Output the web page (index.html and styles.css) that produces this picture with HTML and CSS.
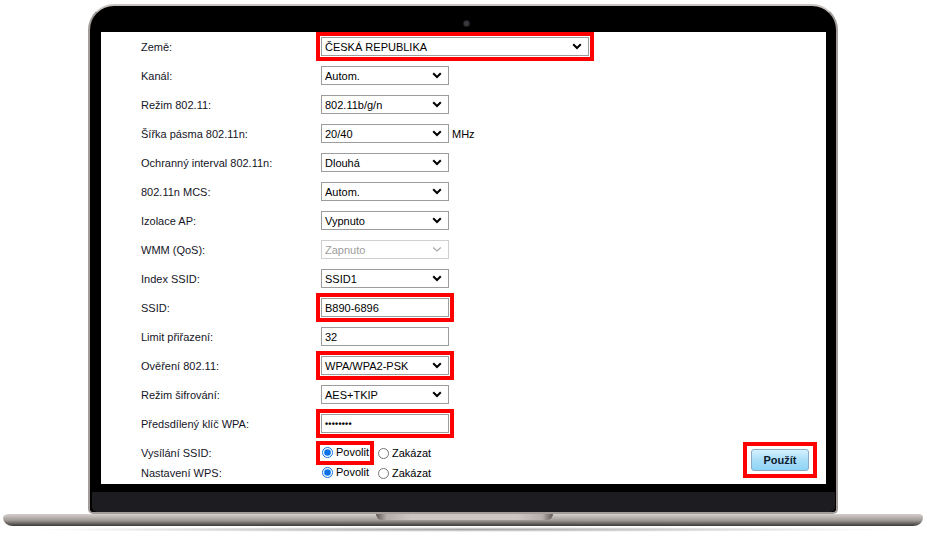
FILE: index.html
```html
<!DOCTYPE html>
<html lang="cs">
<head>
<meta charset="utf-8">
<title>Nastavení WLAN</title>
<link rel="stylesheet" href="styles.css">
</head>
<body>
<div class="page">
  <div class="lid">
    <div class="camera"></div>
    <div class="screen">
      <div class="form">
        <div class="row"><div class="label">Země:</div>
          <div class="hl"><div class="sel wide"><span>ČESKÁ REPUBLIKA</span><svg class="chev" width="10" height="7" viewBox="0 0 10 7"><path d="M1.2 1.3 L5 5 L8.8 1.3" fill="none" stroke="#000" stroke-width="2"/></svg></div></div></div>
        <div class="row"><div class="label">Kanál:</div>
          <div class="sel"><span>Autom.</span><svg class="chev" width="10" height="7" viewBox="0 0 10 7"><path d="M1.2 1.3 L5 5 L8.8 1.3" fill="none" stroke="#000" stroke-width="2"/></svg></div></div>
        <div class="row"><div class="label">Režim 802.11:</div>
          <div class="sel"><span>802.11b/g/n</span><svg class="chev" width="10" height="7" viewBox="0 0 10 7"><path d="M1.2 1.3 L5 5 L8.8 1.3" fill="none" stroke="#000" stroke-width="2"/></svg></div></div>
        <div class="row"><div class="label">Šířka pásma 802.11n:</div>
          <div class="sel"><span>20/40</span><svg class="chev" width="10" height="7" viewBox="0 0 10 7"><path d="M1.2 1.3 L5 5 L8.8 1.3" fill="none" stroke="#000" stroke-width="2"/></svg></div><span class="unit">MHz</span></div>
        <div class="row"><div class="label">Ochranný interval 802.11n:</div>
          <div class="sel"><span>Dlouhá</span><svg class="chev" width="10" height="7" viewBox="0 0 10 7"><path d="M1.2 1.3 L5 5 L8.8 1.3" fill="none" stroke="#000" stroke-width="2"/></svg></div></div>
        <div class="row"><div class="label">802.11n MCS:</div>
          <div class="sel"><span>Autom.</span><svg class="chev" width="10" height="7" viewBox="0 0 10 7"><path d="M1.2 1.3 L5 5 L8.8 1.3" fill="none" stroke="#000" stroke-width="2"/></svg></div></div>
        <div class="row"><div class="label">Izolace AP:</div>
          <div class="sel"><span>Vypnuto</span><svg class="chev" width="10" height="7" viewBox="0 0 10 7"><path d="M1.2 1.3 L5 5 L8.8 1.3" fill="none" stroke="#000" stroke-width="2"/></svg></div></div>
        <div class="row"><div class="label">WMM (QoS):</div>
          <div class="sel disabled"><span>Zapnuto</span><svg class="chev" width="10" height="7" viewBox="0 0 10 7"><path d="M1.2 1.5 L5 5 L8.8 1.5" fill="none" stroke="#a8a8a8" stroke-width="1.2"/></svg></div></div>
        <div class="row"><div class="label">Index SSID:</div>
          <div class="sel"><span>SSID1</span><svg class="chev" width="10" height="7" viewBox="0 0 10 7"><path d="M1.2 1.3 L5 5 L8.8 1.3" fill="none" stroke="#000" stroke-width="2"/></svg></div></div>
        <div class="row"><div class="label">SSID:</div>
          <div class="hl"><input class="txt" type="text" value="B890-6896"></div></div>
        <div class="row"><div class="label">Limit přiřazení:</div>
          <input class="txt" type="text" value="32"></div>
        <div class="row"><div class="label">Ověření 802.11:</div>
          <div class="hl"><div class="sel"><span>WPA/WPA2-PSK</span><svg class="chev" width="10" height="7" viewBox="0 0 10 7"><path d="M1.2 1.3 L5 5 L8.8 1.3" fill="none" stroke="#000" stroke-width="2"/></svg></div></div></div>
        <div class="row"><div class="label">Režim šifrování:</div>
          <div class="sel"><span>AES+TKIP</span><svg class="chev" width="10" height="7" viewBox="0 0 10 7"><path d="M1.2 1.3 L5 5 L8.8 1.3" fill="none" stroke="#000" stroke-width="2"/></svg></div></div>
        <div class="row"><div class="label">Předsdílený klíč WPA:</div>
          <div class="hl"><div class="txt pwd">••••••••</div></div></div>
        <div class="row radio-row first"><div class="label">Vysílání SSID:</div>
          <div class="hl tight"><label class="opt"><input type="radio" name="bc" checked>Povolit</label></div>
          <label class="opt"><input type="radio" name="bc">Zakázat</label></div>
        <div class="row radio-row"><div class="label">Nastavení WPS:</div>
          <div class="plain"><label class="opt"><input type="radio" name="wps" checked>Povolit</label></div>
          <label class="opt"><input type="radio" name="wps">Zakázat</label></div>
      </div>
      <div class="actions">
        <div class="hl btn-hl"><button class="apply" type="button">Použít</button></div>
      </div>
    </div>
    <div class="chin"></div>
  </div>
  <div class="base"><div class="notch"></div></div>
  <div class="shadow"></div>
</div>
</body>
</html>
```

FILE: styles.css
```css
* { box-sizing: border-box; }
html, body { margin: 0; padding: 0; background: #fff; }
body { font-family: "Liberation Sans", Arial, sans-serif; font-size: 11px; color: #15151f; }
.page { width: 927px; height: 537px; overflow: hidden; display: flex; flex-direction: column; }

.lid {
  margin: 4px 0 0 88px;
  width: 750px;
  height: 510px;
  background: #000;
  border: 2px solid #a29d9a;
  border-top-color: #c8c3c0;
  border-radius: 26px 26px 5px 5px;
  padding: 0 10px 0 11px;
  display: flex;
  flex-direction: column;
  align-items: flex-start;
}
.camera {
  width: 5px; height: 5px; border-radius: 50%;
  background: #3a3a3e; box-shadow: 0 0 0 1px #1e1e20;
  margin: 15px 0 6px 363px;
}
.screen {
  width: 725px;
  height: 452px;
  background: #fff;
  display: flex;
  overflow: hidden;
}
.chin {
  margin: 8px -9px 0 -9px;
  width: calc(100% + 18px);
  flex: 1;
  background: #1d1c20;
  border-radius: 0 0 5px 5px;
}

.form { padding-left: 40px; display: flex; flex-direction: column; }
.row { height: 29px; display: flex; align-items: center; }
.radio-row { height: 20px; }
.radio-row.first { margin-top: 5px; }
.label { width: 180px; flex: none; }

.sel {
  width: 128px; height: 19px;
  border: 1px solid #9c9c9c;
  background: #fff;
  display: flex; align-items: center; justify-content: space-between;
  padding: 0 6px 0 3px;
  color: #000;
}
.sel.wide { width: 268px; }
.sel.disabled { color: #9d9d9d; border-color: #cfcfcf; }
.chev { display: block; }
.unit { margin-left: 3px; color: #000; }

.txt {
  width: 128px; height: 19px;
  border: 1px solid #9c9c9c;
  padding: 0 3px;
  font: 11px "Liberation Sans", Arial, sans-serif;
  color: #000;
  background: #fff;
  outline: none;
  display: flex; align-items: center;
  margin: 0;
}
.pwd { font-size: 9px; letter-spacing: 0.2px; font-weight: bold; }

.hl {
  border: 4px solid #ff0000;
  padding: 1px;
  margin: -5px;
  background: #fff;
}
.hl.tight { padding: 1px; margin-right: 4px; }
.plain { padding: 0 9px 0 0; }
.opt { display: inline-flex; align-items: center; color: #000; font-size: 11px; }
.opt input { margin: 0 3px 0 0; width: 11px; height: 11px; accent-color: #0a72e8; }
.hl.tight .opt input, .plain .opt input { margin-left: 1px; }

.actions { align-self: flex-end; margin: 0 9px 6px auto; }
.btn-hl { margin: 0; padding: 3px 4px; }
.apply {
  width: 58px; height: 22px;
  border: 1px solid #88aac6;
  border-radius: 3px;
  background: linear-gradient(#d6f1fd, #a9def8 50%, #8fd4f6);
  font: bold 11px "Liberation Sans", Arial, sans-serif;
  color: #0c1a2c;
  padding: 0;
}

.base {
  margin-left: 3px;
  width: 920px; height: 12px;
  background: linear-gradient(#d5d0cd 0, #bdb7b4 25%, #9d9794 55%, #5c5855 85%, #3a3735 100%);
  border-radius: 6px 4px 10px 10px / 4px 4px 8px 8px;
  display: flex; justify-content: center;
}
.notch {
  margin-left: 3px;
  width: 177px; height: 6px;
  background: linear-gradient(90deg, #5d5856 0, #b6aeab 6%, #cdc5c1 20%, #cdc5c1 80%, #b6aeab 94%, #5d5856 100%);
  border-radius: 0 0 6px 6px;
}
.shadow {
  margin: 1px 0 0 28px;
  width: 870px; height: 5px;
  background: radial-gradient(ellipse at center, rgba(90,90,90,0.55), rgba(120,120,120,0) 70%);
}
```
